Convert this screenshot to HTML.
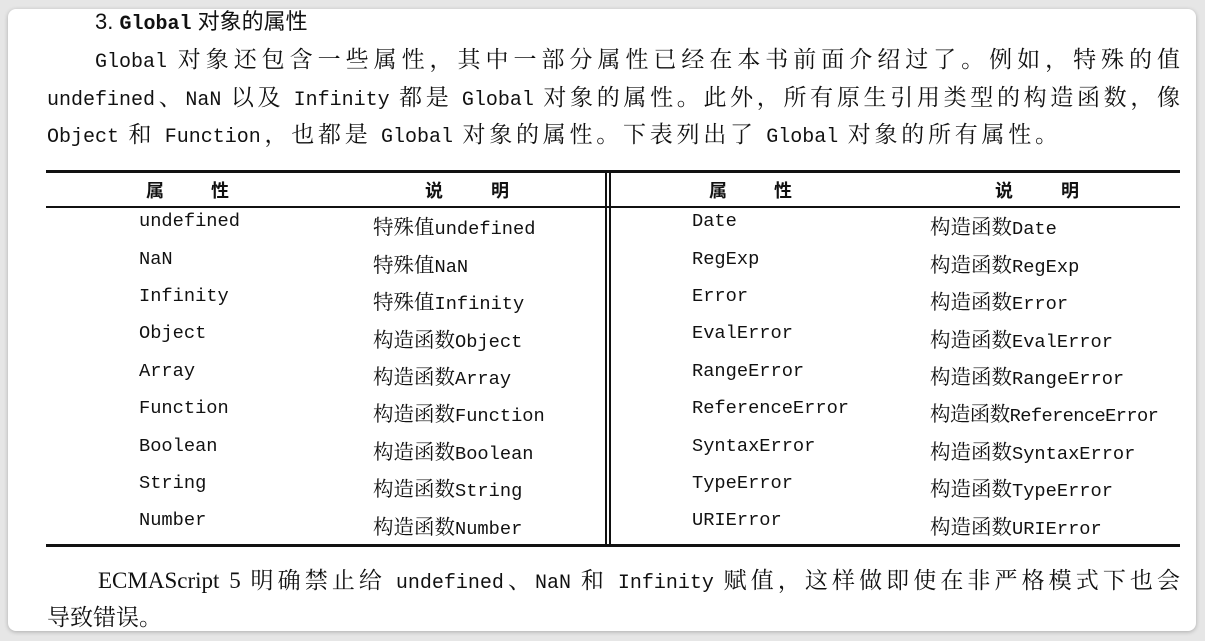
<!DOCTYPE html>
<html><head><meta charset="utf-8"><style>
html,body{margin:0;padding:0;background:#e6e6e6;width:1205px;height:641px;overflow:hidden}
.page{position:absolute;left:8px;top:9px;width:1188px;height:622px;background:#fff;border-radius:8px;box-shadow:0 1px 4px rgba(0,0,0,.25)}
.ln{position:absolute;white-space:nowrap;font-family:"Liberation Serif","Noto Serif CJK SC",serif;font-size:23px;color:#111;line-height:30px}
.j{text-align:justify;text-align-last:justify;white-space:normal}
.m{font-family:"Liberation Mono",monospace;font-size:20px}
.c{position:absolute;white-space:nowrap;font-family:"Liberation Mono",monospace;font-size:18.7px;color:#111;line-height:24px}
.c .z{font-family:"Noto Serif CJK SC",serif;font-size:20.5px}
.h{position:absolute;font-family:"Noto Sans CJK SC",sans-serif;font-weight:bold;font-size:18px;color:#111}
.r{position:absolute;background:#111}
</style></head><body>
<div class="page"></div>
<div class="ln" style="left:95px;top:7px;font-family:'Liberation Sans','Noto Sans CJK SC',sans-serif;font-size:22px">3. <b class="m" style="font-size:20px">Global</b> 对象的属性</div>
<div class="ln j" style="left:95px;top:45px;width:1085px"><span class="m">Global</span> 对象还包含一些属性，其中一部分属性已经在本书前面介绍过了。例如，特殊的值</div>
<div class="ln j" style="left:47px;top:83px;width:1133px"><span class="m">undefined</span>、<span class="m">NaN</span> 以及 <span class="m">Infinity</span> 都是 <span class="m">Global</span> 对象的属性。此外，所有原生引用类型的构造函数，像</div>
<div class="ln j" style="left:47px;top:120px;width:1011px"><span class="m">Object</span> 和 <span class="m">Function</span>，也都是 <span class="m">Global</span> 对象的属性。下表列出了 <span class="m">Global</span> 对象的所有属性。</div>

<div class="r" style="left:46px;top:170px;width:1134px;height:3px"></div>
<div class="r" style="left:46px;top:206px;width:1134px;height:2px"></div>
<div class="r" style="left:46px;top:544px;width:1134px;height:3px"></div>
<div class="r" style="left:605px;top:170px;width:2px;height:377px"></div>
<div class="r" style="left:609px;top:170px;width:2px;height:377px"></div>
<div class="h" style="left:146px;top:177px">属</div><div class="h" style="left:211px;top:177px">性</div>
<div class="h" style="left:425px;top:177px">说</div><div class="h" style="left:491px;top:177px">明</div>
<div class="h" style="left:709px;top:177px">属</div><div class="h" style="left:774px;top:177px">性</div>
<div class="h" style="left:995px;top:177px">说</div><div class="h" style="left:1061px;top:177px">明</div>

<div class="c" style="left:139px;top:209px">undefined</div><div class="c" style="left:373px;top:213px"><span class="z">特殊值</span>undefined</div>
<div class="c" style="left:139px;top:247px">NaN</div><div class="c" style="left:373px;top:251px"><span class="z">特殊值</span>NaN</div>
<div class="c" style="left:139px;top:284px">Infinity</div><div class="c" style="left:373px;top:288px"><span class="z">特殊值</span>Infinity</div>
<div class="c" style="left:139px;top:321px">Object</div><div class="c" style="left:373px;top:326px"><span class="z">构造函数</span>Object</div>
<div class="c" style="left:139px;top:359px">Array</div><div class="c" style="left:373px;top:363px"><span class="z">构造函数</span>Array</div>
<div class="c" style="left:139px;top:396px">Function</div><div class="c" style="left:373px;top:400px"><span class="z">构造函数</span>Function</div>
<div class="c" style="left:139px;top:434px">Boolean</div><div class="c" style="left:373px;top:438px"><span class="z">构造函数</span>Boolean</div>
<div class="c" style="left:139px;top:471px">String</div><div class="c" style="left:373px;top:475px"><span class="z">构造函数</span>String</div>
<div class="c" style="left:139px;top:508px">Number</div><div class="c" style="left:373px;top:513px"><span class="z">构造函数</span>Number</div>

<div class="c" style="left:692px;top:209px">Date</div><div class="c" style="left:930px;top:213px"><span class="z">构造函数</span>Date</div>
<div class="c" style="left:692px;top:247px">RegExp</div><div class="c" style="left:930px;top:251px"><span class="z">构造函数</span>RegExp</div>
<div class="c" style="left:692px;top:284px">Error</div><div class="c" style="left:930px;top:288px"><span class="z">构造函数</span>Error</div>
<div class="c" style="left:692px;top:321px">EvalError</div><div class="c" style="left:930px;top:326px"><span class="z">构造函数</span>EvalError</div>
<div class="c" style="left:692px;top:359px">RangeError</div><div class="c" style="left:930px;top:363px"><span class="z">构造函数</span>RangeError</div>
<div class="c" style="left:692px;top:396px">ReferenceError</div><div class="c" style="left:930px;top:400px;letter-spacing:-0.6px"><span class="z">构造函数</span>ReferenceError</div>
<div class="c" style="left:692px;top:434px">SyntaxError</div><div class="c" style="left:930px;top:438px"><span class="z">构造函数</span>SyntaxError</div>
<div class="c" style="left:692px;top:471px">TypeError</div><div class="c" style="left:930px;top:475px"><span class="z">构造函数</span>TypeError</div>
<div class="c" style="left:692px;top:508px">URIError</div><div class="c" style="left:930px;top:513px"><span class="z">构造函数</span>URIError</div>

<div class="ln j" style="left:98px;top:566px;width:1082px">ECMAScript 5 明确禁止给 <span class="m">undefined</span>、<span class="m">NaN</span> 和 <span class="m">Infinity</span> 赋值，这样做即使在非严格模式下也会</div>
<div class="ln" style="left:47px;top:603px">导致错误。</div>
</body></html>
